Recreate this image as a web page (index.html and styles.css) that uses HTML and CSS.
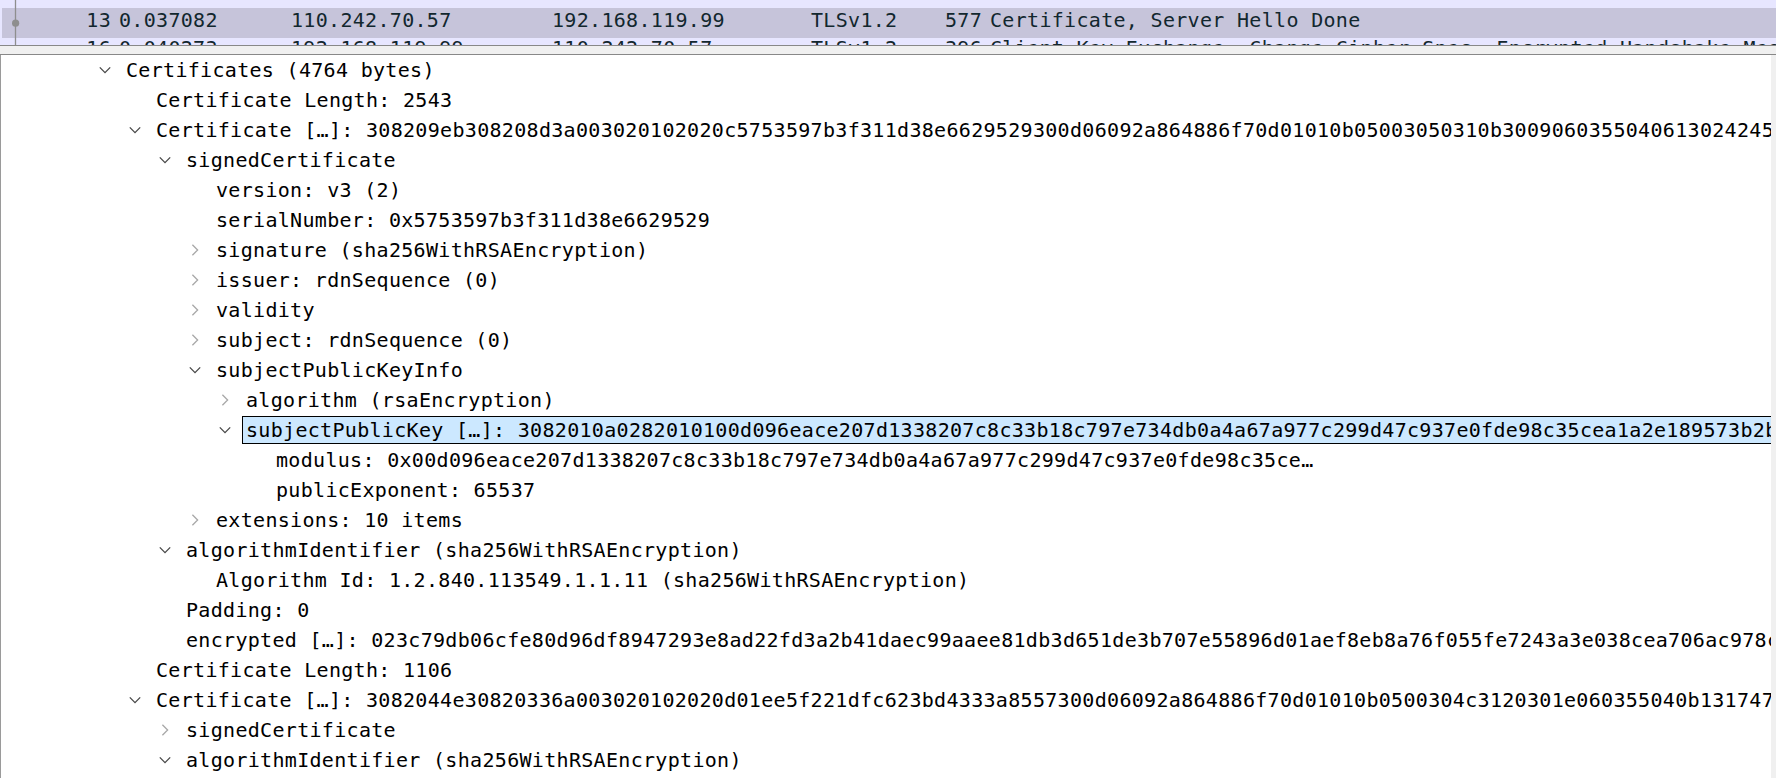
FILE: index.html
```html
<!DOCTYPE html>
<html lang="en">
<head>
    <meta charset="UTF-8">
    <meta name="viewport" content="width=device-width, initial-scale=1.0">
    <title>Packet Details</title>
    <link rel="stylesheet" href="styles.css">
</head>
<body>
    <div class="app">
        <!-- packet list (only the selected row is in view) -->
        <div class="packet-list">
            <div class="pkt-row prev"></div>
            <div class="pkt-row selected">
                <span class="c-no">13</span>
                <span class="c-time">0.037082</span>
                <span class="c-src">110.242.70.57</span>
                <span class="c-dst">192.168.119.99</span>
                <span class="c-proto">TLSv1.2</span>
                <span class="c-len">577</span>
                <span class="c-info">Certificate, Server Hello Done</span>
            </div>
            <div class="pkt-row next">
                <span class="c-no">16</span>
                <span class="c-time">0.040273</span>
                <span class="c-src">192.168.119.99</span>
                <span class="c-dst">110.242.70.57</span>
                <span class="c-proto">TLSv1.2</span>
                <span class="c-len">396</span>
                <span class="c-info">Client Key Exchange, Change Cipher Spec, Encrypted Handshake Message</span>
            </div>
            <svg class="related" width="32" height="45" viewBox="0 0 32 45">
                <line x1="15.5" y1="0" x2="15.5" y2="45" stroke="#8e8e8e" stroke-width="1.3"/>
                <circle cx="15.6" cy="23.2" r="3.6" fill="#8e8e8e"/>
            </svg>
        </div>

        <div class="splitter"></div>

        <!-- packet details tree -->
        <div class="details">
            <div class="tree">
                <div class="tree-row l0"><span class="toggle open"></span><span class="label">Certificates (4764 bytes)</span></div>
                <div class="tree-row l1"><span class="toggle"></span><span class="label">Certificate Length: 2543</span></div>
                <div class="tree-row l1"><span class="toggle open"></span><span class="label">Certificate […]: 308209eb308208d3a003020102020c5753597b3f311d38e6629529300d06092a864886f70d01010b05003050310b300906035504061302424531193017060355040a1310476c6f62616c5369676e</span></div>
                <div class="tree-row l2"><span class="toggle open"></span><span class="label">signedCertificate</span></div>
                <div class="tree-row l3"><span class="toggle"></span><span class="label">version: v3 (2)</span></div>
                <div class="tree-row l3"><span class="toggle"></span><span class="label">serialNumber: 0x5753597b3f311d38e6629529</span></div>
                <div class="tree-row l3"><span class="toggle closed"></span><span class="label">signature (sha256WithRSAEncryption)</span></div>
                <div class="tree-row l3"><span class="toggle closed"></span><span class="label">issuer: rdnSequence (0)</span></div>
                <div class="tree-row l3"><span class="toggle closed"></span><span class="label">validity</span></div>
                <div class="tree-row l3"><span class="toggle closed"></span><span class="label">subject: rdnSequence (0)</span></div>
                <div class="tree-row l3"><span class="toggle open"></span><span class="label">subjectPublicKeyInfo</span></div>
                <div class="tree-row l4"><span class="toggle closed"></span><span class="label">algorithm (rsaEncryption)</span></div>
                <div class="tree-row l4"><span class="toggle open"></span><span class="label selected">subjectPublicKey […]: 3082010a0282010100d096eace207d1338207c8c33b18c797e734db0a4a67a977c299d47c937e0fde98c35cea1a2e189573b2b6d1f0e4a</span></div>
                <div class="tree-row l5"><span class="toggle"></span><span class="label">modulus: 0x00d096eace207d1338207c8c33b18c797e734db0a4a67a977c299d47c937e0fde98c35ce…</span></div>
                <div class="tree-row l5"><span class="toggle"></span><span class="label">publicExponent: 65537</span></div>
                <div class="tree-row l3"><span class="toggle closed"></span><span class="label">extensions: 10 items</span></div>
                <div class="tree-row l2"><span class="toggle open"></span><span class="label">algorithmIdentifier (sha256WithRSAEncryption)</span></div>
                <div class="tree-row l3"><span class="toggle"></span><span class="label">Algorithm Id: 1.2.840.113549.1.1.11 (sha256WithRSAEncryption)</span></div>
                <div class="tree-row l2"><span class="toggle"></span><span class="label">Padding: 0</span></div>
                <div class="tree-row l2"><span class="toggle"></span><span class="label">encrypted […]: 023c79db06cfe80d96df8947293e8ad22fd3a2b41daec99aaee81db3d651de3b707e55896d01aef8eb8a76f055fe7243a3e038cea706ac978c3e51a2</span></div>
                <div class="tree-row l1"><span class="toggle"></span><span class="label">Certificate Length: 1106</span></div>
                <div class="tree-row l1"><span class="toggle open"></span><span class="label">Certificate […]: 3082044e30820336a003020102020d01ee5f221dfc623bd4333a8557300d06092a864886f70d01010b0500304c3120301e060355040b1317476c6f62616c5369676e</span></div>
                <div class="tree-row l2"><span class="toggle closed"></span><span class="label">signedCertificate</span></div>
                <div class="tree-row l2"><span class="toggle open"></span><span class="label">algorithmIdentifier (sha256WithRSAEncryption)</span></div>
            </div>
            <div class="scrollbar"></div>
        </div>
    </div>

    <script>
// draw the expand / collapse chevrons
const chevrons = {
    open: '<svg width="12" height="12" viewBox="0 0 12 12"><path d="M0.8 3.4 L6 8.6 L11.2 3.4" fill="none" stroke-width="1.3"/></svg>',
    closed: '<svg width="12" height="12" viewBox="0 0 12 12"><path d="M3.4 0.8 L8.6 6 L3.4 11.2" fill="none" stroke-width="1.3"/></svg>'
};

document.querySelectorAll('.toggle').forEach(el => {
    if (el.classList.contains('open')) el.innerHTML = chevrons.open;
    if (el.classList.contains('closed')) el.innerHTML = chevrons.closed;
});
    </script>
</body>
</html>
```

FILE: styles.css
```css
* {
    box-sizing: border-box;
}

body {
    margin: 0;
    background-color: #ffffff;
    font-family: "DejaVu Sans Mono", "Liberation Mono", monospace;
    font-size: 20px;
    letter-spacing: 0.31px;
    color: #000;
    overflow: hidden;
}

.app {
    width: 1776px;
    height: 778px;
    display: flex;
    flex-direction: column;
    overflow: hidden;
}

/* packet list */
.packet-list {
    position: relative;
    height: 45px;
    flex: none;
    background-color: #e7e6ff;
    color: #12272e;
    overflow: hidden;
}

.pkt-row {
    display: flex;
    height: 30px;
    white-space: pre;
}

.pkt-row.prev {
    height: 8px;
}

.pkt-row.selected {
    margin-left: 2px;
    line-height: 25px;
    background-color: #c6c4da;
}

.pkt-row.next {
    margin-left: 2px;
    line-height: 21px;
}

.pkt-row span {
    flex: none;
}

.c-no {
    width: 109px;
    text-align: right;
}

.c-time {
    margin-left: 8px;
    width: 172px;
}

.c-src {
    width: 261px;
}

.c-dst {
    width: 259px;
}

.c-proto {
    width: 134px;
}

.c-len {
    width: 37px;
    text-align: right;
}

.c-info {
    margin-left: 8px;
}

.related {
    position: absolute;
    left: 0;
    top: 0;
}

.splitter {
    height: 10px;
    flex: none;
    background-color: #f0f0f0;
    border-top: 1px solid #888;
    border-bottom: 1px solid #888;
}

/* packet details */
.details {
    flex: 1;
    display: flex;
    min-height: 0;
    border-left: 1px solid #9a9a9a;
}

.tree {
    flex: 1;
    min-width: 0;
    overflow: hidden;
}

.scrollbar {
    width: 5px;
    flex: none;
    background-color: #f0f0f0;
}

.tree-row {
    display: flex;
    align-items: center;
    height: 30px;
    white-space: pre;
}

.l0 { padding-left: 95px; }
.l1 { padding-left: 125px; }
.l2 { padding-left: 155px; }
.l3 { padding-left: 185px; }
.l4 { padding-left: 215px; }
.l5 { padding-left: 245px; }

.toggle {
    flex: none;
    width: 30px;
    height: 12px;
    display: flex;
}

.toggle svg {
    margin-left: 3px;
}

.toggle.open svg path {
    stroke: #474747;
}

.toggle.closed svg path {
    stroke: #a8a8a8;
}

.label {
    flex: none;
    line-height: 30px;
}

.label.selected {
    height: 28px;
    line-height: 26px;
    margin-left: -4px;
    padding: 0 4px 0 3px;
    border: 1px solid #000;
    background-color: #cce8ff;
}
```
